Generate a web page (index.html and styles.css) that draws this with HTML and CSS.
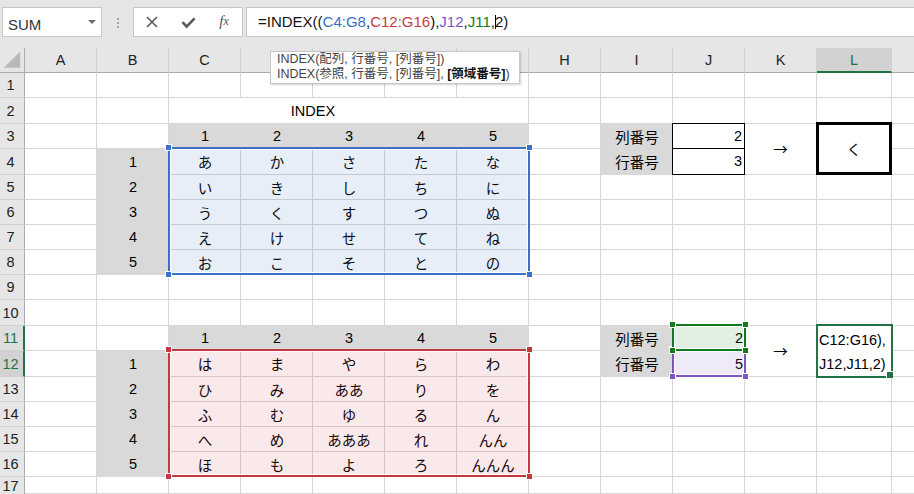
FILE: index.html
```html
<!DOCTYPE html>
<html lang="ja">
<head>
<meta charset="utf-8">
<title>INDEX</title>
<link rel="stylesheet" href="styles.css">
</head>
<body>
<div class="app">
  <div class="fbar">
    <div class="namebox"><span class="nm">SUM</span><i class="dd"></i></div>
    <div class="grip"><b></b><b></b><b></b></div>
    <div class="btns">
      <span class="btn"><svg width="12" height="12" viewBox="0 0 12 12"><path d="M1 1L11 11M11 1L1 11" stroke="#5a5a5a" stroke-width="1.6" fill="none"/></svg></span>
      <span class="btn ok"><svg width="15" height="12" viewBox="0 0 15 12"><path d="M1.5 5.2L5.6 9.6L13.6 1.4" stroke="#5a5a5a" stroke-width="2.6" fill="none"/></svg></span>
      <span class="btn fx">f<small>x</small></span>
    </div>
    <div class="formula">=INDEX((<span class="fb">C4:G8</span>,<span class="fr">C12:G16</span>),<span class="fp">J12</span>,<span class="fg">J11</span>,<span class="caret"></span>2)</div>
  </div>

  <div class="sheet">
    <!-- column headers (D-G lie under the function tooltip) -->
    <div class="ch corner"><svg width="25" height="25" viewBox="0 0 25 25"><polygon points="21,3 21,20 4,20" fill="#b9b9b9"/></svg></div>
    <div class="ch cA">A</div>
    <div class="ch cB">B</div>
    <div class="ch cC">C</div>
    <div class="ch cD"></div>
    <div class="ch cE"></div>
    <div class="ch cF"></div>
    <div class="ch cG"></div>
    <div class="ch cH">H</div>
    <div class="ch cI">I</div>
    <div class="ch cJ">J</div>
    <div class="ch cK">K</div>
    <div class="ch cL sel">L</div>
    <div class="ch cM"></div>

    <!-- rows with gridlines -->
    <div class="row r1"><span class="rh">1</span></div>
    <div class="row r2"><span class="rh">2</span></div>
    <div class="row r3"><span class="rh">3</span></div>
    <div class="row r4"><span class="rh">4</span></div>
    <div class="row r5"><span class="rh">5</span></div>
    <div class="row r6"><span class="rh">6</span></div>
    <div class="row r7"><span class="rh">7</span></div>
    <div class="row r8"><span class="rh">8</span></div>
    <div class="row r9"><span class="rh">9</span></div>
    <div class="row r10"><span class="rh">10</span></div>
    <div class="row r11"><span class="rh sel lt">11</span></div>
    <div class="row r12"><span class="rh sel">12</span></div>
    <div class="row r13"><span class="rh">13</span></div>
    <div class="row r14"><span class="rh">14</span></div>
    <div class="row r15"><span class="rh">15</span></div>
    <div class="row r16"><span class="rh">16</span></div>
    <div class="row r17"><span class="rh last">17</span></div>

    <!-- merged title -->
    <div class="cover cC xG r2"></div>
    <div class="cell cD xE r2">INDEX</div>

    <!-- table 1 headers -->
    <div class="cell g cC r3">1</div>
    <div class="cell g cD r3">2</div>
    <div class="cell g cE r3">3</div>
    <div class="cell g cF r3">4</div>
    <div class="cell g cG r3">5</div>
    <div class="cell g cB r4">1</div>
    <div class="cell g cB r5">2</div>
    <div class="cell g cB r6">3</div>
    <div class="cell g cB r7">4</div>
    <div class="cell g cB r8">5</div>

    <!-- table 2 headers -->
    <div class="cell g cC r11">1</div>
    <div class="cell g cD r11">2</div>
    <div class="cell g cE r11">3</div>
    <div class="cell g cF r11">4</div>
    <div class="cell g cG r11">5</div>
    <div class="cell g cB r12">1</div>
    <div class="cell g cB r13">2</div>
    <div class="cell g cB r14">3</div>
    <div class="cell g cB r15">4</div>
    <div class="cell g cB r16">5</div>

    <!-- parameter blocks -->
    <div class="cell g cI r3">列番号</div>
    <div class="cell g cI r4">行番号</div>
    <div class="cell bx num cJ r3">2</div>
    <div class="cell bx num cJ r4">3</div>
    <div class="cell cover cK r3 y4"><span class="arw">→</span></div>
    <div class="cell thick cL r3 y4">く</div>

    <div class="cell g cI r11">列番号</div>
    <div class="cell g cI r12">行番号</div>
    <div class="cell cover cK r11 y12"><span class="arw">→</span></div>

    <!-- reference highlights -->
    <div class="rng blue cC xG r4 y8"><i class="tl"></i><i class="tr"></i><i class="bl"></i><i class="br"></i></div>
    <div class="rng red cC xG r12 y16"><i class="tl"></i><i class="tr"></i><i class="bl"></i><i class="br"></i></div>
    <div class="rng purple cJ r12"><i class="tl"></i><i class="tr"></i><i class="bl"></i><i class="br"></i></div>
    <div class="rng green cJ r11"><i class="tl"></i><i class="tr"></i><i class="bl"></i><i class="br"></i></div>

    <div class="cell num cJ r11">2</div>
    <div class="cell num cJ r12">5</div>

    <!-- table 1 body -->
    <div class="cell cC r4">あ</div><div class="cell cD r4">か</div><div class="cell cE r4">さ</div><div class="cell cF r4">た</div><div class="cell cG r4">な</div>
    <div class="cell cC r5">い</div><div class="cell cD r5">き</div><div class="cell cE r5">し</div><div class="cell cF r5">ち</div><div class="cell cG r5">に</div>
    <div class="cell cC r6">う</div><div class="cell cD r6">く</div><div class="cell cE r6">す</div><div class="cell cF r6">つ</div><div class="cell cG r6">ぬ</div>
    <div class="cell cC r7">え</div><div class="cell cD r7">け</div><div class="cell cE r7">せ</div><div class="cell cF r7">て</div><div class="cell cG r7">ね</div>
    <div class="cell cC r8">お</div><div class="cell cD r8">こ</div><div class="cell cE r8">そ</div><div class="cell cF r8">と</div><div class="cell cG r8">の</div>

    <!-- table 2 body -->
    <div class="cell cC r12">は</div><div class="cell cD r12">ま</div><div class="cell cE r12">や</div><div class="cell cF r12">ら</div><div class="cell cG r12">わ</div>
    <div class="cell cC r13">ひ</div><div class="cell cD r13">み</div><div class="cell cE r13">ああ</div><div class="cell cF r13">り</div><div class="cell cG r13">を</div>
    <div class="cell cC r14">ふ</div><div class="cell cD r14">む</div><div class="cell cE r14">ゆ</div><div class="cell cF r14">る</div><div class="cell cG r14">ん</div>
    <div class="cell cC r15">へ</div><div class="cell cD r15">め</div><div class="cell cE r15">あああ</div><div class="cell cF r15">れ</div><div class="cell cG r15">んん</div>
    <div class="cell cC r16">ほ</div><div class="cell cD r16">も</div><div class="cell cE r16">よ</div><div class="cell cF r16">ろ</div><div class="cell cG r16">んんん</div>

    <!-- active cell in edit mode -->
    <div class="active cL r11 y12">C12:G16),<br>J12,J11,2)</div>
  </div>

  <div class="tip"><div class="tl1">INDEX(配列, 行番号, [列番号])</div><div class="tl1">INDEX(参照, 行番号, [列番号], <b>[領域番号]</b>)</div></div>
</div>
</body>
</html>
```

FILE: styles.css
```css
* { box-sizing: border-box; margin: 0; padding: 0; }
html, body { width: 914px; height: 494px; overflow: hidden; background: #fff; }
body { font-family: "Liberation Sans", "Noto Sans CJK JP", sans-serif; color: #000; }

.app { position: relative; width: 914px; height: 494px; display: flex; flex-direction: column; overflow: hidden; }

/* ---------- formula bar ---------- */
.fbar { height: 48px; flex: none; background: #e6e6e6; display: flex; align-items: flex-start; padding: 7px 0 0 2px; }
.namebox { flex: none; width: 100px; height: 30px; background: #fff; border: 1px solid #c6c6c6; display: flex; align-items: center; justify-content: space-between; padding: 0 5px; font-size: 15px; color: #333; }
.nm { padding-top: 4px; }
.dd { width: 0; height: 0; border-left: 4px solid transparent; border-right: 4px solid transparent; border-top: 4px solid #6e6e6e; }
.grip { flex: none; width: 2px; margin: 11px 0 0 15px; display: flex; flex-direction: column; gap: 2px; }
.grip b { display: block; width: 2px; height: 2px; background: #a3a3a3; }
.btns { flex: none; width: 110px; height: 30px; margin-left: 14px; background: #fff; border: 1px solid #c6c6c6; display: flex; }
.btn { width: 36px; display: flex; align-items: center; justify-content: center; }
.ok svg { margin-top: 2px; }
.fx { font-family: "Liberation Serif", serif; font-style: italic; font-size: 15px; color: #555; padding-bottom: 2px; }
.fx small { font-size: 12px; }
.formula { flex: none; width: 680px; height: 30px; margin-left: 3px; background: #fff; border: 1px solid #c6c6c6; padding-left: 11px; font-size: 15px; line-height: 28px; color: #111; white-space: nowrap; }
.fb { color: #3a70c8; }
.fr { color: #c63a44; }
.fp { color: #7f56c1; }
.fg { color: #127a1c; }
.caret { display: inline-block; width: 1px; height: 14px; background: #000; vertical-align: -2px; margin-right: -1px; }

/* ---------- tooltip ---------- */
.tip { position: absolute; left: 270px; top: 51px; width: 250px; height: 33px; background: #fff; border: 1px solid #c8c8c8; box-shadow: 1px 1px 2px rgba(0,0,0,.18); padding: 0 0 0 6px; font-size: 12.5px; color: #444; white-space: nowrap; }
.tl1 { height: 15px; line-height: 15px; }
.tip b { color: #111; }

/* ---------- sheet grid ---------- */
.sheet { flex: 1; display: grid; grid-template-columns: 25px repeat(11, 72px) 75px 1fr; grid-template-rows: 25px 25px 26px 25px 26px 25px 25px 25px 25px 25px 26px 25px 26px 25px 25px 25px 25px 1fr; font-size: 14.5px; }

.cA { grid-column-start: 2; } .cB { grid-column-start: 3; } .cC { grid-column-start: 4; } .cD { grid-column-start: 5; }
.cE { grid-column-start: 6; } .cF { grid-column-start: 7; } .cG { grid-column-start: 8; } .cH { grid-column-start: 9; }
.cI { grid-column-start: 10; } .cJ { grid-column-start: 11; } .cK { grid-column-start: 12; } .cL { grid-column-start: 13; }
.cM { grid-column-start: 14; }
.xE { grid-column-end: 7; } .xG { grid-column-end: 9; }

.r1 { grid-row-start: 2; } .r2 { grid-row-start: 3; } .r3 { grid-row-start: 4; } .r4 { grid-row-start: 5; }
.r5 { grid-row-start: 6; } .r6 { grid-row-start: 7; } .r7 { grid-row-start: 8; } .r8 { grid-row-start: 9; }
.r9 { grid-row-start: 10; } .r10 { grid-row-start: 11; } .r11 { grid-row-start: 12; } .r12 { grid-row-start: 13; }
.r13 { grid-row-start: 14; } .r14 { grid-row-start: 15; } .r15 { grid-row-start: 16; } .r16 { grid-row-start: 17; }
.r17 { grid-row-start: 18; }
.y4 { grid-row-end: 6; } .y8 { grid-row-end: 10; } .y12 { grid-row-end: 14; } .y16 { grid-row-end: 18; }

/* column headers */
.ch { grid-row: 1; background: #e6e6e6; border-right: 1px solid #d0d0d0; border-bottom: 1px solid #ababab; display: flex; align-items: center; justify-content: center; color: #222; }
.corner { grid-column: 1; border-right-color: #ababab; }
.corner svg { display: block; }
.ch.sel { background: #d2d2d2; color: #217346; border-bottom: 2px solid #217346; }
.ch.cM { border-right: 0; }

/* rows + gridlines */
.row { grid-column: 1 / -1; display: flex;
  background:
    linear-gradient(#d6d6d6, #d6d6d6) 0 100% / 100% 1px no-repeat,
    linear-gradient(#d6d6d6, #d6d6d6) 891px 0 / 1px 100% no-repeat,
    repeating-linear-gradient(to right, transparent 0 71px, #d6d6d6 71px 72px) 25px 0 / 792px 100% no-repeat; }
.rh { flex: none; width: 25px; height: 100%; background: #e6e6e6; border-right: 1px solid #ababab; border-bottom: 1px solid #d0d0d0; display: flex; align-items: center; justify-content: center; padding-right: 3px; color: #222; }
.rh.sel { background: #d2d2d2; color: #217346; border-right: 2px solid #217346; padding-right: 2px; }
.rh.sel.lt { background: #dedede; }
.rh.last { height: 17px; align-items: flex-start; padding-top: 1px; line-height: 16px; border-bottom: 0; }

/* cells */
.cell { display: flex; align-items: center; justify-content: center; padding-bottom: 1px; white-space: nowrap; }
.g { background: #d9d9d9; }
.num { justify-content: flex-end; padding-right: 2px; }
.cover { background: #fff; margin: 0 1px 1px 0; }
.bx { margin: -1px 0 0 -1px; border: 1px solid #000; background: #fff; }
.thick { margin: -2px 0 0 -1px; border: 3px solid #000; background: #fff; }
.arw { font-family: "Noto Sans CJK JP", sans-serif; }

/* reference range highlights */
.rng { position: relative; margin: -2px -1px 0 -1px; border: 2px solid currentColor; box-shadow: inset 0 0 0 1px #fff; }
.rng i { position: absolute; width: 7px; height: 7px; border: 1px solid #fff; background: currentColor; }
.rng .tl { left: -5px; top: -5px; }
.rng .tr { right: -5px; top: -5px; }
.rng .bl { left: -5px; bottom: -5px; }
.rng .br { right: -5px; bottom: -5px; }
.blue { color: #3a70c8; background: rgba(58, 112, 200, .12); }
.red { color: #c4393f; background: rgba(196, 57, 63, .11); }
.purple { color: #7f56c1; background: rgba(127, 86, 193, .12); }
.green { color: #127a1c; background: rgba(18, 122, 28, .12); }

/* active cell (edit mode) */
.active { position: relative; margin: -2px -1px -1px -1px; border: 2px solid #217346; background: #fff; padding: 2px 0 0 1px; line-height: 24px; white-space: nowrap; }
.active::after { content: ""; position: absolute; right: -2px; bottom: -2px; width: 6px; height: 6px; background: #217346; border-left: 1px solid #fff; border-top: 1px solid #fff; }
```
